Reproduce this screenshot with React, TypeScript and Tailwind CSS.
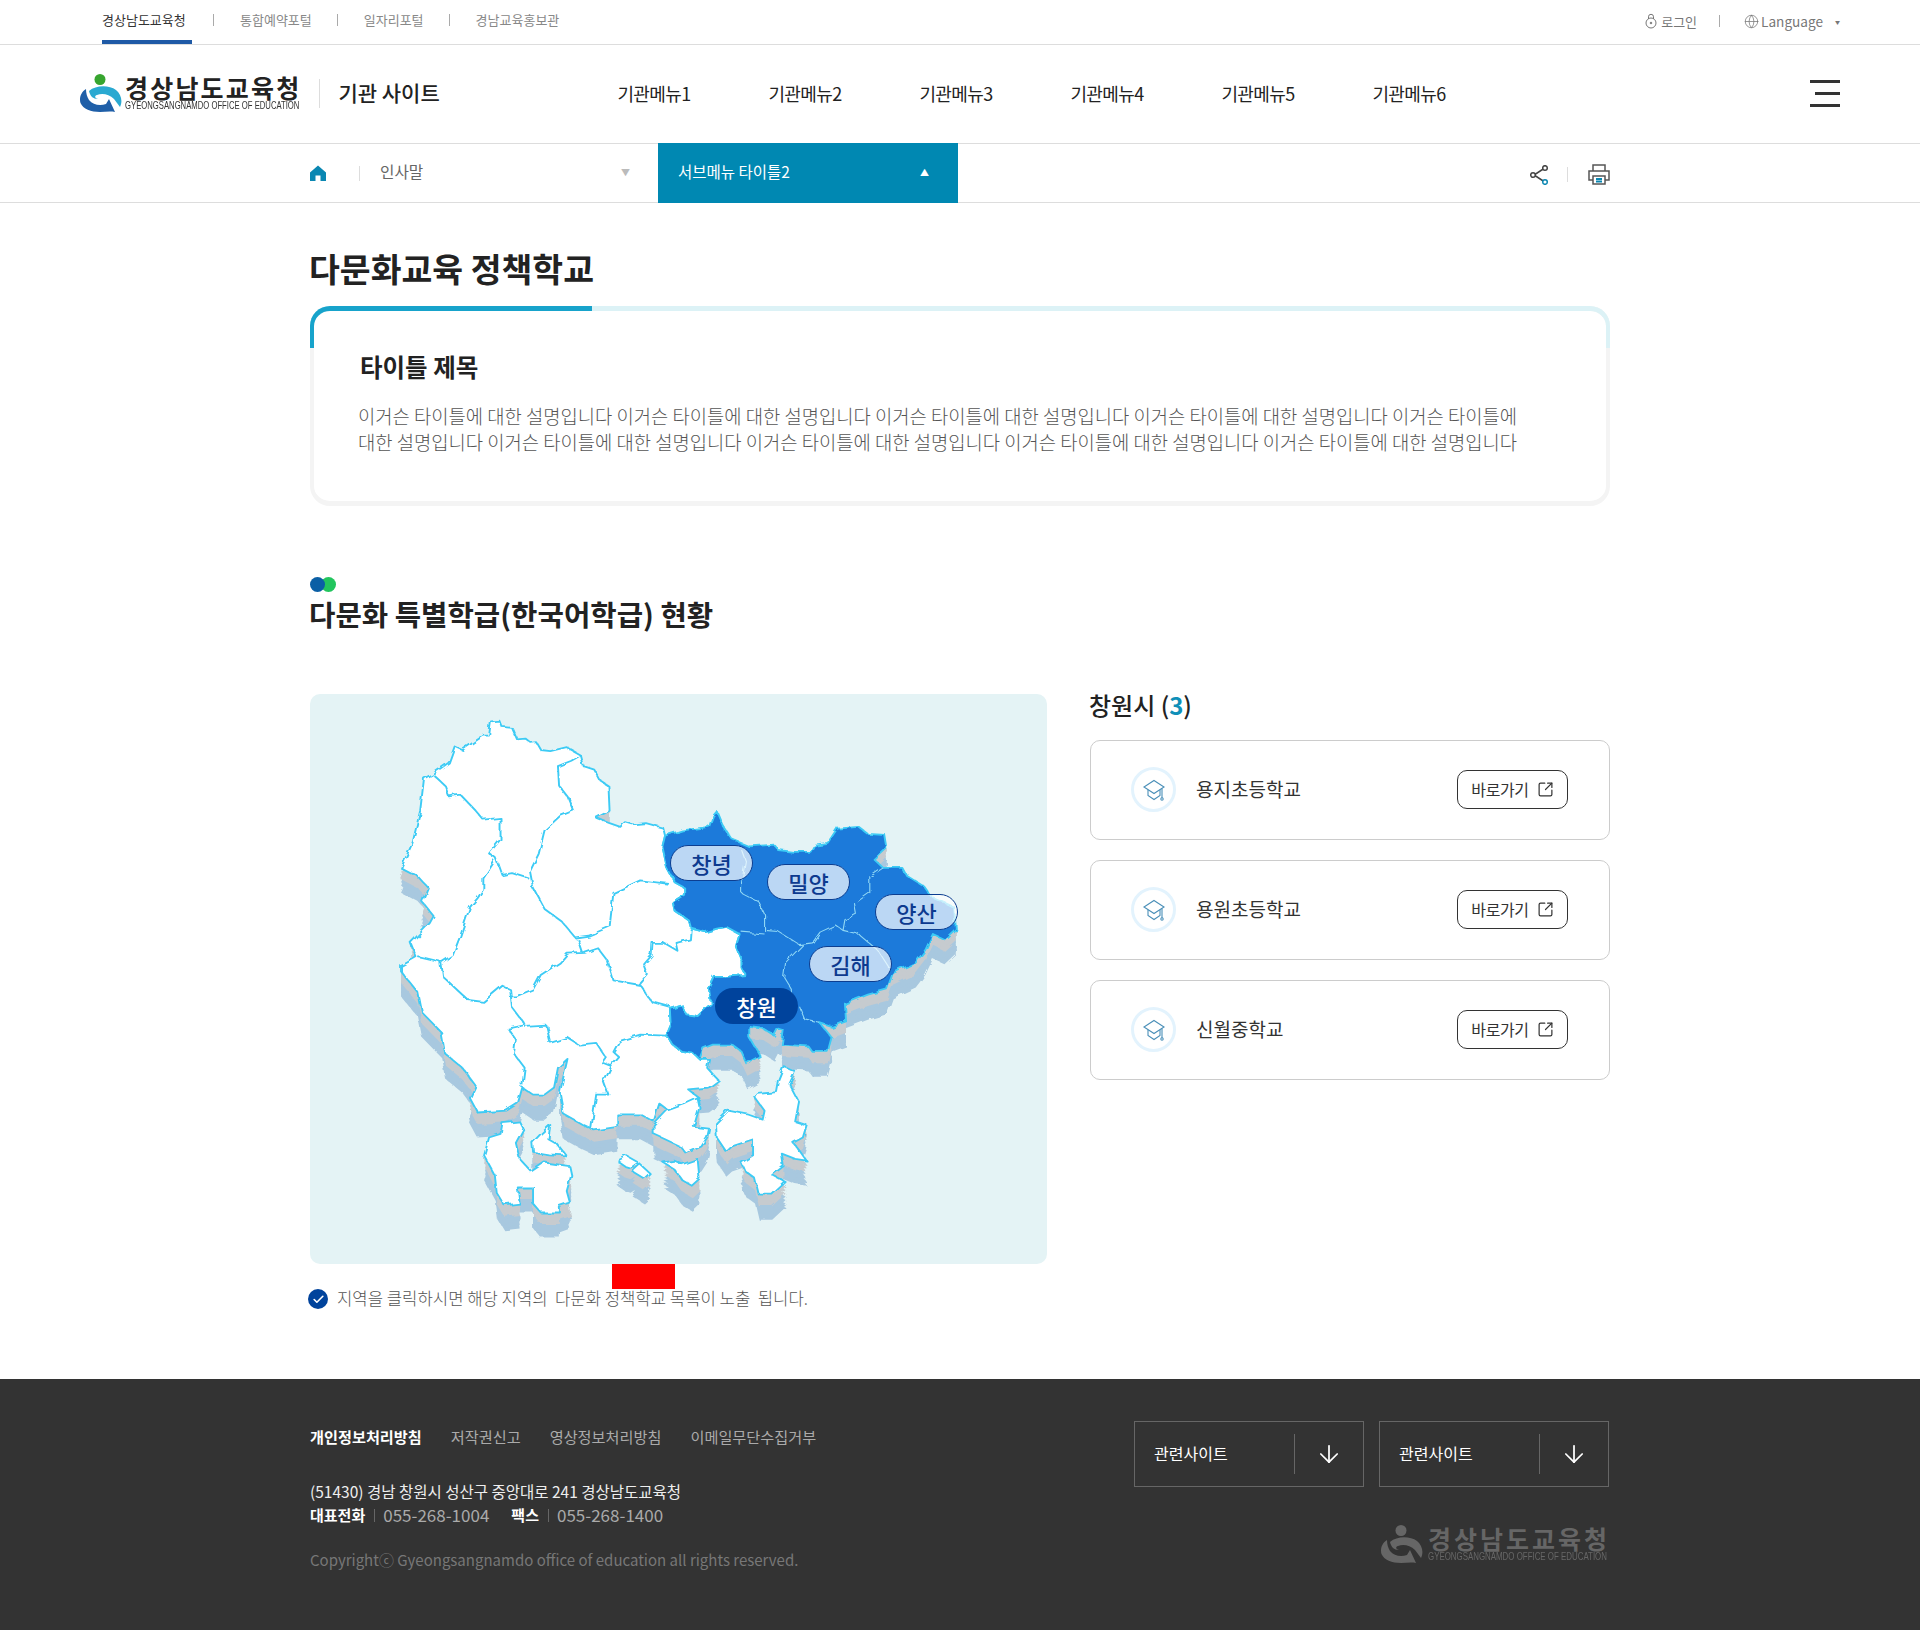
import { ArrowDown, Check, Globe, SquareArrowOutUpRight } from "lucide-react";

const LAND =
  "290,60 312,58 318,75 345,78 358,110 380,108 395,120 408,118 420,140 445,143 488,132 525,155 532,185 560,195 575,225 597,240 600,310 565,330 600,345 628,355 640,342 660,348 695,345 740,358 745,380 738,410 750,470 770,510 795,525 795,545 765,565 770,590 810,620 815,640 850,650 880,640 905,635 940,655 930,690 945,730 945,750 955,770 905,775 875,775 860,810 865,850 830,885 800,880 790,855 760,865 762,905 748,940 765,965 790,985 820,990 835,1005 860,1005 855,1030 885,1065 860,1085 805,1090 835,1115 820,1140 755,1150 730,1130 715,1180 680,1160 620,1160 620,1195 560,1205 530,1190 480,1160 470,1100 490,1005 465,1030 455,1085 430,1105 400,1105 372,1085 360,1130 330,1150 255,1155 235,1115 250,1080 215,1030 170,990 160,930 110,875 100,820 55,760 55,745 95,720 80,680 130,625 140,605 110,565 125,525 100,495 55,470 85,400 105,310 115,220 140,205 180,175 195,130 215,140 270,100 285,100";

const BLUE =
  "745,380 738,410 750,470 770,510 795,525 795,545 765,565 770,590 810,620 815,640 850,650 880,640 905,635 940,655 930,690 945,730 945,750 955,770 905,775 875,775 860,810 865,850 830,885 800,880 790,855 760,865 762,905 748,940 765,965 790,985 820,990 835,1005 845,975 870,965 920,965 945,985 960,1020 995,1000 965,945 965,915 1000,920 1030,940 1040,920 1055,925 1050,965 1120,970 1130,985 1170,985 1180,945 1150,905 1180,915 1218,900 1215,850 1275,825 1325,810 1340,765 1400,735 1425,700 1445,655 1475,670 1505,640 1500,580 1440,550 1420,520 1375,490 1365,470 1315,470 1290,445 1325,410 1320,378 1275,375 1250,355 1195,360 1170,400 1135,405 1125,425 1080,425 1040,420 1030,405 965,410 920,390 895,350 880,312 870,325 860,355 790,365";

const ISLANDS = [
  "320,1185 365,1180 375,1200 355,1240 365,1285 395,1320 430,1295 495,1305 500,1330 488,1375 497,1410 470,1420 470,1435 420,1435 400,1410 400,1365 360,1365 365,1410 325,1415 305,1380 300,1330 272,1275 285,1225 315,1215",
  "445,1190 440,1230 465,1245 487,1275 440,1272 400,1265 398,1240 420,1215",
  "715,1190 750,1150 800,1130 830,1115 835,1140 820,1195 860,1200 855,1225 840,1250 800,1270 785,1250 745,1230 715,1215",
  "620,1290 645,1277 675,1295 655,1310 640,1305",
  "660,1320 680,1300 705,1325 690,1340",
  "740,1295 770,1290 790,1300 830,1285 835,1340 815,1360 790,1345 770,1315",
  "1055,1025 1085,1040 1070,1075 1095,1125 1085,1180 1115,1190 1105,1225 1080,1240 1095,1260 1115,1290 1085,1285 1050,1270 1055,1305 1025,1330 1060,1350 1025,1385 990,1385 980,1340 955,1320 945,1295 975,1275 975,1230 920,1250 905,1265 880,1225 878,1185 910,1150 960,1160 1000,1175 1005,1150 978,1110 985,1100 1035,1095 1040,1065",
];

const BORDERS = [
  "140,210 170,240 180,270 210,265 250,310 270,335 315,330 315,390 285,430 305,445 320,490 345,485 390,500",
  "525,155 500,170 465,185 468,240 490,270 505,310 470,325 430,365 415,430 392,480 400,525 430,585 475,620 510,665 545,660 600,635 610,540 680,505 755,515",
  "300,450 270,500 270,530 255,555 235,580 210,660 190,715 160,735 100,720",
  "160,735 165,775 230,840 270,845 320,800 340,810 345,860 380,910 335,920 355,950 350,990 378,1030 372,1080",
  "340,830 355,830 400,810 420,770 470,735 490,710 535,708 570,695 595,730 610,785 680,798 710,845 760,860",
  "518,670 530,708",
  "680,795 700,770 690,740 710,715 712,680 740,680 780,705 775,680 810,670 812,640",
  "380,915 435,912 445,960 490,945 520,965 565,960 590,1000 580,1015 605,1025 585,1070 597,1105 565,1105 552,1200",
  "605,1025 625,1000 610,985 625,955 680,937 748,940",
];

const BLUE_BORDERS = [
  "945,420 955,450 945,510 945,540 990,565 1005,600 1005,645 1040,648 1095,685 1130,680 1150,650 1190,630 1210,645 1250,655 1300,700 1330,750",
  "1315,470 1280,495 1280,540 1240,570 1245,600 1215,615 1210,645",
  "945,650 1005,655",
  "1105,685 1060,735 1055,775 1075,810 1075,850",
  "1095,855 1110,895 1150,905",
];

const LAYERS = [
  { dy: 70, fill: "#a8c8df" },
  { dy: 60, fill: "#a8c8df" },
  { dy: 50, fill: "#a8c8df" },
  { dy: 40, fill: "#a8c8df" },
  { dy: 32, fill: "#c6cbcf" },
  { dy: 22, fill: "#c6cbcf" },
  { dy: 12, fill: "#c6cbcf" },
];

const PILLS = [
  { name: "창녕", left: "left-[360px] top-[151px]", active: false },
  { name: "밀양", left: "left-[457px] top-[170px]", active: false },
  { name: "양산", left: "left-[565px] top-[200px]", active: false },
  { name: "김해", left: "left-[499px] top-[252px]", active: false },
  { name: "창원", left: "left-[405px] top-[294px]", active: true },
];

const SCHOOLS = ["용지초등학교", "용원초등학교", "신월중학교"];
const NAV = ["기관메뉴1", "기관메뉴2", "기관메뉴3", "기관메뉴4", "기관메뉴5", "기관메뉴6"];

function LogoMark({ top, left, right }: { top: string; left: string; right: string }) {
  return (
    <svg viewBox="0 0 42 38" className="h-[38px] w-[42px] shrink-0">
      <circle cx="20" cy="5.5" r="5.5" fill={top} />
      <path d="M9 17C16 11 29 11 36 16C41 20 43 27 40 33L34 25C29 20 22 19 17 21C14 22 15 24 18 25C13 25 10 22 9 17Z" fill={right} />
      <path d="M6 15C1 18 -1 24 0.5 29C3 35 11 38 20 38C25 38 30 37 35 38L29 25L26 30C20 32 13 31 9 26C7 23 6 19 6 15Z" fill={left} />
    </svg>
  );
}

function Logo({ dark }: { dark?: boolean }) {
  return (
    <div className={`flex items-center ${dark ? "gap-[5px]" : "gap-[3px]"}`}>
      {dark ? (
        <LogoMark top="#666666" left="#666666" right="#666666" />
      ) : (
        <LogoMark top="#37a52f" left="#1f5fa8" right="#2aa9d1" />
      )}
      <div className="flex flex-col">
        <span className={`text-[25px] leading-[25px] font-bold whitespace-nowrap ${dark ? "tracking-[3px] text-[#666]" : "tracking-[2.2px] text-[#222]"}`}>
          경상남도교육청
        </span>
        <div className={dark ? "h-[11px] w-[180px]" : "h-[11px] w-[174px]"}>
          <span
            className={`block origin-left font-['Liberation_Sans'] text-[10px] leading-[11px] whitespace-nowrap ${
              dark ? "scale-x-[0.79] text-[#666]" : "scale-x-[0.77] text-[#333]"
            }`}
          >
            GYEONGSANGNAMDO OFFICE OF EDUCATION
          </span>
        </div>
      </div>
    </div>
  );
}

function MapChart() {
  const shape = (fill: string, stroke?: string) => (
    <>
      <polygon points={LAND} fill={fill} stroke={stroke} strokeWidth="5" strokeLinejoin="round" />
      {ISLANDS.map((points) => (
        <polygon key={points} points={points} fill={fill} stroke={stroke} strokeWidth="5" strokeLinejoin="round" />
      ))}
    </>
  );

  return (
    <svg viewBox="0 0 1568 1568" preserveAspectRatio="none" className="absolute left-[70px] top-[6px] h-[560px] w-[600px]">
      <defs>
        <filter id="coast" x="-5%" y="-5%" width="110%" height="110%">
          <feTurbulence type="fractalNoise" baseFrequency="0.035" numOctaves="2" seed="4" />
          <feDisplacementMap in="SourceGraphic" scale="16" />
        </filter>
      </defs>
      <g filter="url(#coast)">
        {LAYERS.map((layer) => (
          <g key={layer.dy} transform={`translate(0 ${layer.dy})`}>
            {shape(layer.fill)}
            <polygon points={BLUE} fill={layer.fill} />
          </g>
        ))}
        {shape("#ffffff", "#3ccbf5")}
        <polygon points={BLUE} fill="#1a7ada" stroke="#3ccbf5" strokeWidth="5" strokeLinejoin="round" />
        {BORDERS.map((points) => (
          <polyline key={points} points={points} fill="none" stroke="#3ccbf5" strokeWidth="5" strokeLinejoin="round" />
        ))}
        {BLUE_BORDERS.map((points) => (
          <polyline key={points} points={points} fill="none" stroke="#8fd6f5" strokeWidth="3" strokeLinejoin="round" />
        ))}
      </g>
    </svg>
  );
}

function CapIcon() {
  return (
    <svg viewBox="0 0 24 24" className="size-6" fill="none" stroke="#4a8fb8" strokeWidth="1.1">
      <path d="M12 2.5L22 9L12 15.5L2 9Z" />
      <path d="M6 12V17.5L12 21.5L18 17.5V12" />
      <path d="M20 10.5V20" />
      <circle cx="20" cy="21" r="1.2" />
    </svg>
  );
}

function TopBar() {
  return (
    <div className="flex h-[45px] items-center justify-between border-b border-[#ddd] pl-[102px] pr-[80px] text-[13px]">
      <div className="flex h-full items-center">
        <span className="flex h-full w-[90px] items-center border-b-4 border-[#1f5aa6] text-[#333]">경상남도교육청</span>
        <div className="flex h-full items-center pb-[4px] text-[#888]">
          <span className="ml-[21px] mr-[26px] h-[12px] w-px bg-[#aaa]" />
          <span>통합예약포털</span>
          <span className="mx-[25.5px] h-[12px] w-px bg-[#aaa]" />
          <span>일자리포털</span>
          <span className="mx-[25.5px] h-[12px] w-px bg-[#aaa]" />
          <span>경남교육홍보관</span>
        </div>
      </div>
      <div className="flex items-center pb-[1px] text-[#777]">
        <svg viewBox="0 0 12 16" className="mr-[4px] h-[16px] w-[12px]" fill="none" stroke="#777" strokeWidth="1">
          <path d="M3.5 6V3.8a2.5 2.5 0 0 1 5 0V6" />
          <circle cx="6" cy="10" r="5" />
          <circle cx="6" cy="10" r="0.8" fill="#777" />
        </svg>
        <span>로그인</span>
        <span className="ml-[22px] mr-[24px] h-[12px] w-px bg-[#aaa]" />
        <Globe className="mr-[2px] size-[15px]" strokeWidth={1.2} />
        <span className="text-[13.6px]">Language</span>
        <span className="ml-[12px] text-[5px]">▼</span>
      </div>
    </div>
  );
}

function MainHeader() {
  return (
    <div className="flex h-[99px] items-center border-b border-[#ddd] pb-[2px] pl-[80px] pr-[80px]">
      <Logo />
      <span className="ml-[18px] mr-[18px] h-[29px] w-px bg-[#ddd]" />
      <span className="w-[279px] text-[21px] font-medium whitespace-nowrap text-[#222]">기관 사이트</span>
      <nav className="flex gap-[78px] text-[18px] tracking-[-0.6px] text-[#222]">
        {NAV.map((item) => (
          <span key={item} className="w-[73px] whitespace-nowrap">
            {item}
          </span>
        ))}
      </nav>
      <div className="ml-auto flex w-[30px] flex-col items-end gap-[9px]">
        <span className="h-[3px] w-[30px] bg-[#333]" />
        <span className="h-[3px] w-[25px] bg-[#333]" />
        <span className="h-[3px] w-[30px] bg-[#333]" />
      </div>
    </div>
  );
}

function SubBar() {
  return (
    <div className="h-[59px] border-b border-[#ddd]">
      <div className="mx-auto flex h-[58px] w-[1300px] items-center">
        <svg viewBox="0 0 16 16" className="size-[16px]" fill="#0a87b2">
          <path d="M8 0.5L16 7.5V16H10.5V10.5H5.5V16H0V7.5Z" />
        </svg>
        <span className="ml-[33px] mr-[20px] h-[15px] w-px bg-[#ddd]" />
        <span className="w-[241px] pb-[2px] text-[15.7px] text-[#666]">인사말</span>
        <span className="text-[9px] text-[#bbb]">▼</span>
        <div className="-my-px ml-[28px] flex h-[60px] w-[300px] items-center justify-between bg-[#0088b2] pl-[20px] pr-[29px] text-[15.5px] text-white">
          <span className="pb-[2px]">서브메뉴 타이틀2</span>
          <span className="text-[9px]">▲</span>
        </div>
        <svg viewBox="0 0 19 20" className="ml-auto mt-[3px] h-[20px] w-[19px] translate-x-[2px]" fill="none" stroke="#444" strokeWidth="1.5">
          <path d="M14 3.5L4 10L14 16.5" />
          <circle cx="15" cy="3" r="2.3" fill="#fff" />
          <circle cx="3" cy="10" r="2.3" fill="#fff" />
          <circle cx="15" cy="17" r="2.3" fill="#fff" stroke="#0a87b2" />
        </svg>
        <span className="mx-[20px] mt-[2px] h-[15px] w-px bg-[#ddd]" />
        <svg viewBox="0 0 22 21" className="mt-[3px] h-[21px] w-[22px]" fill="none" stroke="#555" strokeWidth="1.5">
          <path d="M5 7V1H17V7" />
          <path d="M5 16H1V7H21V16H17" />
          <rect x="5" y="12" width="12" height="8" fill="#fff" />
          <path d="M8 15H14M8 17.5H14" stroke="#0a87b2" strokeWidth="2" />
        </svg>
      </div>
    </div>
  );
}

function IntroCard() {
  return (
    <div className="relative h-[200px] rounded-[20px] border-x-4 border-y-[5px] border-[#f4f4f4] pl-[46px] pt-[38px]">
      <span className="absolute -left-[4px] -top-[5px] h-[42px] w-[1300px] rounded-t-[20px] border-x-4 border-t-[5px] border-[#dcf2f6]" />
      <span className="absolute -left-[4px] -top-[5px] h-[42px] w-[282px] rounded-tl-[20px] border-l-4 border-t-[5px] border-[#17a3cb]" />
      <h3 className="text-[24.5px] leading-[36px] font-semibold text-[#222]">타이틀 제목</h3>
      <p className="-ml-[2px] mt-[18px] text-[18.8px] leading-[26px] font-light whitespace-nowrap text-[#555]">
        이거슨 타이틀에 대한 설명입니다 이거슨 타이틀에 대한 설명입니다 이거슨 타이틀에 대한 설명입니다 이거슨 타이틀에 대한 설명입니다 이거슨 타이틀에
        <br />
        대한 설명입니다 이거슨 타이틀에 대한 설명입니다 이거슨 타이틀에 대한 설명입니다 이거슨 타이틀에 대한 설명입니다 이거슨 타이틀에 대한 설명입니다
      </p>
    </div>
  );
}

function SchoolCard({ name }: { name: string }) {
  return (
    <div className="flex h-[100px] items-center rounded-[10px] border border-[#ccc] pb-[1px] pl-[40px] pr-[41px]">
      <span className="flex size-[45px] items-center justify-center rounded-full border-[3px] border-[#e3f3fd]">
        <CapIcon />
      </span>
      <span className="ml-[20px] text-[19px] text-[#333]">{name}</span>
      <button className="ml-auto flex h-[39px] w-[111px] items-center justify-center gap-[8px] rounded-[10px] border border-[#333] pb-[1px] text-[16px] tracking-[-0.4px] text-[#333]">
        바로가기
        <SquareArrowOutUpRight className="size-[17px]" strokeWidth={1.7} />
      </button>
    </div>
  );
}

function RelatedSite() {
  return (
    <div className="flex h-[66px] w-[230px] items-center border border-[#666] pl-[19px] text-[16px] text-white">
      <span className="w-[140px] pb-[2px]">관련사이트</span>
      <span className="h-[40px] w-px bg-[#666]" />
      <ArrowDown className="ml-[20px] size-[28px]" strokeWidth={1.5} />
    </div>
  );
}

function Footer() {
  return (
    <footer className="h-[251px] bg-[#333]">
      <div className="mx-auto flex w-[1300px] justify-between">
        <div className="pt-[47px]">
          <div className="flex gap-[29px] text-[15.2px] leading-[20px] text-[#aaa]">
            <span className="font-bold text-white">개인정보처리방침</span>
            <span>저작권신고</span>
            <span>영상정보처리방침</span>
            <span>이메일무단수집거부</span>
          </div>
          <p className="mt-[33px] text-[15.5px] leading-[24px] text-[#eee]">(51430) 경남 창원시 성산구 중앙대로 241 경상남도교육청</p>
          <div className="flex h-[24px] items-center text-[17px] text-[#aaa]">
            <span className="text-[15px] font-bold text-white">대표전화</span>
            <span className="ml-[9px] mr-[8px] h-[13px] w-px bg-[#666]" />
            <span>055-268-1004</span>
            <span className="ml-[22px] text-[15px] font-bold text-white">팩스</span>
            <span className="ml-[9px] mr-[8px] h-[13px] w-px bg-[#666]" />
            <span>055-268-1400</span>
          </div>
          <p className="mt-[22px] text-[15px] leading-[22px] text-[#777]">Copyrightⓒ Gyeongsangnamdo office of education all rights reserved.</p>
        </div>
        <div className="pr-px pt-[42px]">
          <div className="flex gap-[15px]">
            <RelatedSite />
            <RelatedSite />
          </div>
          <div className="-mr-px mt-[38px] flex justify-end">
            <Logo dark />
          </div>
        </div>
      </div>
    </footer>
  );
}

export default function App() {
  return (
    <div className="min-h-[1630px] bg-white font-['Noto_Sans_CJK_KR','Noto_Sans',sans-serif]">
      <TopBar />
      <MainHeader />
      <SubBar />

      <main className="mx-auto w-[1300px] pb-[70px]">
        <h1 className="-ml-px mb-[15px] mt-[42px] text-[33.5px] leading-[46px] font-bold text-[#222]">다문화교육 정책학교</h1>
        <IntroCard />

        <div className="mt-[71px] flex">
          <span className="size-[15px] rounded-full bg-[#22c55e]" />
          <span className="-order-1 z-10 -mr-[4px] size-[15px] rounded-full bg-[#0b5fa5]" />
        </div>
        <h2 className="-ml-px mt-[4px] text-[28.7px] leading-[36px] font-semibold text-[#222]">다문화 특별학급(한국어학급) 현황</h2>

        <div className="mt-[62px] flex items-start justify-between">
          <div className="relative h-[570px] w-[737px] rounded-[10px] bg-[#e4f3f5]">
            <MapChart />
            {PILLS.map((pill) => (
              <span
                key={pill.name}
                className={`absolute flex h-[36px] w-[83px] items-center justify-center rounded-full text-[22px] font-medium ${pill.left} ${
                  pill.active ? "bg-[#00439c] text-white" : "border border-[#0c3e91] bg-white/70 text-[#0d3a8f]"
                }`}
              >
                {pill.name}
              </span>
            ))}
          </div>

          <div className="-mt-[4px] w-[520px]">
            <h3 className="-ml-[1px] text-[24px] leading-[30px] font-medium text-[#222]">
              창원시 (<span className="font-bold text-[#0f8fb8]">3</span>)
            </h3>
            <div className="mt-[20px] flex flex-col gap-[20px]">
              {SCHOOLS.map((name) => (
                <SchoolCard key={name} name={name} />
              ))}
            </div>
          </div>
        </div>

        <div className="relative -ml-[2px] mt-[25px] flex h-[20px] items-center gap-[9px] whitespace-pre text-[16.7px] font-light text-[#555]">
          <span className="flex size-[20px] items-center justify-center rounded-full bg-[#00439c]">
            <Check className="size-[13px] text-white" strokeWidth={3} />
          </span>
          지역을 클릭하시면 해당 지역의  다문화 정책학교 목록이 노출  됩니다.
          <span className="absolute -top-[25px] left-[304px] h-[25px] w-[63px] bg-[#ff0000]" />
        </div>
      </main>

      <Footer />
    </div>
  );
}
